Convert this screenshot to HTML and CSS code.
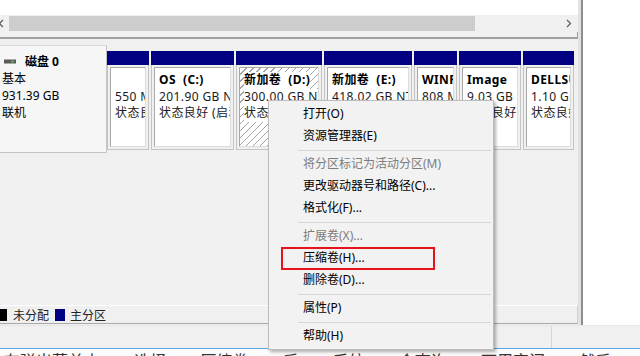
FILE: index.html
```html
<!DOCTYPE html>
<html lang="zh-CN">
<head>
    <meta charset="UTF-8">
    <title>磁盘管理</title>
    <link rel="stylesheet" href="styles.css">
</head>
<body>
<div class="screen">
    <div class="main">
        <div class="left">
            <div class="list"></div>
            <div class="hscroll">
                <div class="sbtn sbtn-left">
                    <svg width="9" height="17" viewBox="0 0 9 17"><polyline points="3,5 -0.5,8.5 3,12" fill="none" stroke="#606060" stroke-width="1.3"/></svg>
                </div>
                <div class="track"><div class="thumb"></div></div>
                <div class="sbtn sbtn-right">
                    <svg width="17" height="17" viewBox="0 0 17 17"><polyline points="6,5 9.5,8.5 6,12" fill="none" stroke="#606060" stroke-width="1.3"/></svg>
                </div>
            </div>
            <div class="splitter"></div>

            <div class="pane">
                <div class="disk-row">
                    <div class="disk-label">
                        <div class="disk-name">
                            <svg class="disk-icon" width="12" height="5" viewBox="0 0 12 5"><rect x="0" y="0.5" width="12" height="4" fill="#5b5b5b"/><rect x="7" y="1.5" width="3" height="2" fill="#35c435"/></svg>
                            磁盘 0
                        </div>
                        <div>基本</div>
                        <div>931.39 GB</div>
                        <div>联机</div>
                    </div>

                    <div class="parts">
                        <div class="part" style="width:42px">
                            <div class="bar"></div>
                            <div class="pbody"><div class="inner">
                                <span class="ln">&nbsp;</span>
                                <span class="ln">550 MB</span>
                                <span class="ln">状态良好 (EFI 系统分区)</span>
                            </div></div>
                        </div>
                        <div class="part" style="width:83px">
                            <div class="bar"></div>
                            <div class="pbody"><div class="inner">
                                <span class="ln name">OS&nbsp;&nbsp;(C:)</span>
                                <span class="ln">201.90 GB NTFS (BitLocker 已加密)</span>
                                <span class="ln">状态良好 (启动, 页面文件, 故障转储)</span>
                            </div></div>
                        </div>
                        <div class="part" style="width:86px">
                            <div class="bar"></div>
                            <div class="pbody"><div class="inner hatched">
                                <span class="ln name">新加卷&nbsp;&nbsp;(D:)</span>
                                <span class="ln">300.00 GB NTFS</span>
                                <span class="ln">状态良好 (基本数据分区)</span>
                            </div></div>
                        </div>
                        <div class="part" style="width:88px">
                            <div class="bar"></div>
                            <div class="pbody"><div class="inner">
                                <span class="ln name">新加卷&nbsp;&nbsp;(E:)</span>
                                <span class="ln">418.02 GB NTFS</span>
                                <span class="ln">状态良好 (基本数据分区)</span>
                            </div></div>
                        </div>
                        <div class="part" style="width:43px">
                            <div class="bar"></div>
                            <div class="pbody"><div class="inner">
                                <span class="ln name">WINRETOOLS</span>
                                <span class="ln">808 MB NTFS</span>
                                <span class="ln">状态良好 (OEM 分区)</span>
                            </div></div>
                        </div>
                        <div class="part" style="width:62px">
                            <div class="bar"></div>
                            <div class="pbody"><div class="inner">
                                <span class="ln name">Image</span>
                                <span class="ln">9.03 GB NTFS</span>
                                <span class="ln">状态良好 (OEM 分区)</span>
                            </div></div>
                        </div>
                        <div class="part" style="width:51px">
                            <div class="bar"></div>
                            <div class="pbody"><div class="inner">
                                <span class="ln name">DELLSUPPORT</span>
                                <span class="ln">1.10 GB NTFS</span>
                                <span class="ln">状态良好 (OEM 分区)</span>
                            </div></div>
                        </div>
                    </div>
                </div>

                <div class="legend">
                    <span class="swatch black"></span>
                    <span class="legend-text">未分配</span>
                    <span class="swatch navy"></span>
                    <span class="legend-text">主分区</span>
                </div>
            </div>
        </div>
        <div class="divider"></div>
        <div class="side"></div>
    </div>

    <div class="status">
        <div class="status-a"></div>
        <div class="status-b"></div>
    </div>
    <div class="accent"></div>
    <div class="below">在弹出菜单中 选择 压缩卷 后 系统 会查询 可用空间 然后 输入压缩量</div>

    <!-- 右键菜单 -->
    <div class="menu">
        <div class="mi">打开(O)</div>
        <div class="mi">资源管理器(E)</div>
        <div class="sep"></div>
        <div class="mi off">将分区标记为活动分区(M)</div>
        <div class="mi">更改驱动器号和路径(C)...</div>
        <div class="mi">格式化(F)...</div>
        <div class="sep"></div>
        <div class="mi off">扩展卷(X)...</div>
        <div class="mi">压缩卷(H)...<span class="mark"></span></div>
        <div class="mi">删除卷(D)...</div>
        <div class="sep"></div>
        <div class="mi">属性(P)</div>
        <div class="sep"></div>
        <div class="mi">帮助(H)</div>
    </div>
</div>
</body>
</html>
```

FILE: styles.css
```css
* {
    box-sizing: border-box;
}
body {
    margin: 0;
    font-family: "Noto Sans", "Noto Sans CJK SC", sans-serif;
    font-size: 12px;
    color: #000;
    background: #fff;
}
.screen {
    position: relative;
    width: 640px;
    height: 356px;
    overflow: hidden;
    display: flex;
    flex-direction: column;
}
.main {
    display: flex;
    height: 325px;
}
.left {
    width: 578px;
    display: flex;
    flex-direction: column;
}
.divider {
    width: 5px;
    border-left: 3px solid #e2e2e2;
    background: #8e8e8e;
}
.side {
    flex: 1;
    background: #fff;
}
.list {
    height: 15px;
    background: #fff;
}

/* scrollbar */
.hscroll {
    height: 17px;
    display: flex;
    background: #f0f0f0;
}
.sbtn svg {
    display: block;
}
.sbtn-left {
    width: 9px;
}
.sbtn-right {
    width: 17px;
}
.track {
    flex: 1;
    padding: 1px 0;
}
.thumb {
    width: 466px;
    height: 15px;
    background: #cdcdcd;
}
.splitter {
    height: 7px;
    background: #f0f0f0;
    border-bottom: 2px solid #a0a0a0;
    border-right: 1px solid #a0a0a0;
}

/* disk pane */
.pane {
    flex: 1;
    background: #f0f0f0;
    display: flex;
    flex-direction: column;
}
.disk-row {
    display: flex;
    margin-top: 6px;
    height: 108px;
}
.disk-label {
    width: 107px;
    background: #f6f6f6;
    border: 1px solid #d8d8d8;
    border-left: none;
    border-right-color: #c4c4c4;
    border-bottom-color: #c4c4c4;
    padding: 7px 0 0 2px;
    line-height: 17px;
}
.disk-name {
    display: flex;
    align-items: center;
    font-weight: bold;
}
.disk-icon {
    margin: 0 9px 0 2px;
}
.parts {
    display: flex;
    gap: 2px;
    padding: 6px 0 3px 0;
}
.part {
    display: flex;
    flex-direction: column;
}
.bar {
    height: 14px;
    background: #000080;
}
.pbody {
    flex: 1;
    background: #f0f0f0;
    border: 1px solid #c4c4c4;
    border-top: none;
    padding: 2px;
}
.inner {
    height: 100%;
    background: #fff;
    border: 1px solid;
    border-color: #a8a8a8 #dcdcdc #dcdcdc #a8a8a8;
    padding: 4px 0 0 4px;
    overflow: hidden;
    white-space: nowrap;
    line-height: 16.5px;
    letter-spacing: 0.4px;
    color: #1a1a1a;
}
.ln {
    display: block;
    width: max-content;
    background: #fff;
}
.ln.name {
    font-weight: bold;
    color: #000;
}
.inner.hatched {
    background: repeating-linear-gradient(135deg, #fff 0 4px, #a3a3a3 4px 5px);
}

/* legend */
.legend {
    margin-top: auto;
    margin-bottom: 1px;
    height: 19px;
    border-top: 1px solid #fff;
    border-bottom: 1px solid #a8a8a8;
    border-right: 1px solid #d0d0d0;
    display: flex;
    align-items: center;
}
.swatch {
    width: 10px;
    height: 12px;
}
.swatch.black {
    background: #000;
    margin-left: -3px;
}
.swatch.navy {
    background: #000080;
}
.legend-text {
    margin: 0 6px;
    color: #222;
}
.legend-text:last-child {
    margin-left: 5px;
}

/* status bar */
.status {
    height: 23px;
    display: flex;
    background: #f0f0f0;
    border-top: 1px solid #e6e6e6;
}
.status-a {
    width: 552px;
    border-right: 1px solid #d6d6d6;
}
.status-b {
    flex: 1;
}
.accent {
    height: 1px;
    background: #54a9de;
}
.below {
    height: 7px;
    overflow: hidden;
    background: #fbfbfb;
    padding: 4px 0 0 4px;
    font-size: 16px;
    line-height: 16px;
    word-spacing: 30px;
    white-space: nowrap;
    color: #333;
}

/* context menu */
.menu {
    position: absolute;
    left: 268px;
    top: 100px;
    width: 226px;
    height: 250px;
    background: #f2f2f2;
    border: 1px solid #bdbdbd;
    box-shadow: 2px 2px 3px rgba(0, 0, 0, 0.3);
    padding: 2px 0;
}
.mi {
    position: relative;
    height: 22px;
    line-height: 22px;
    padding-left: 34px;
    white-space: nowrap;
}
.mi.off {
    color: #7d7d7d;
}
.sep {
    height: 1px;
    background: #d7d7d7;
    margin: 3px 2px 2px 29px;
}
.mark {
    position: absolute;
    left: 12px;
    top: 0;
    width: 154px;
    height: 23px;
    border: 2px solid #e5141b;
}
```
